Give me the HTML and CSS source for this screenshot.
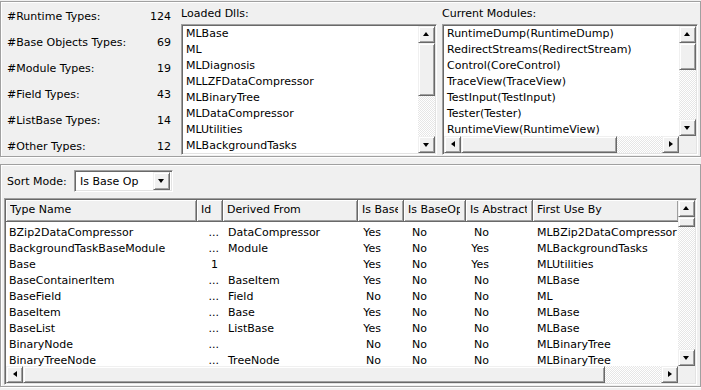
FILE: index.html
```html
<!DOCTYPE html>
<html>
<head>
<meta charset="utf-8">
<link rel="stylesheet" href="styles.css">
</head>
<body>
<div class="panel top">
  <div class="stats">
    <div class="stat"><span>#Runtime Types:</span><span>124</span></div>
    <div class="stat"><span>#Base Objects Types:</span><span>69</span></div>
    <div class="stat"><span>#Module Types:</span><span>19</span></div>
    <div class="stat"><span>#Field Types:</span><span>43</span></div>
    <div class="stat"><span>#ListBase Types:</span><span>14</span></div>
    <div class="stat"><span>#Other Types:</span><span>12</span></div>
  </div>
  <div class="group">
    <div class="glabel">Loaded Dlls:</div>
    <div class="listbox sunken lb1">
      <div class="items">
        <div>MLBase</div>
        <div>ML</div>
        <div>MLDiagnosis</div>
        <div>MLLZFDataCompressor</div>
        <div>MLBinaryTree</div>
        <div>MLDataCompressor</div>
        <div>MLUtilities</div>
        <div>MLBackgroundTasks</div>
      </div>
      <div class="vscroll">
        <div class="sbtn up"></div>
        <div class="thumb t1"></div>
        <div class="track"></div>
        <div class="sbtn down"></div>
      </div>
    </div>
  </div>
  <div class="group">
    <div class="glabel">Current Modules:</div>
    <div class="listbox sunken lb2">
      <div class="items">
        <div>RuntimeDump(RuntimeDump)</div>
        <div>RedirectStreams(RedirectStream)</div>
        <div>Control(CoreControl)</div>
        <div>TraceView(TraceView)</div>
        <div>TestInput(TestInput)</div>
        <div>Tester(Tester)</div>
        <div>RuntimeView(RuntimeView)</div>
      </div>
      <div class="vscroll">
        <div class="sbtn up"></div>
        <div class="thumb t2"></div>
        <div class="track"></div>
        <div class="sbtn down"></div>
      </div>
      <div class="hscroll">
        <div class="sbtn left"></div>
        <div class="thumb h2"></div>
        <div class="track"></div>
        <div class="sbtn right"></div>
      </div>
      <div class="corner"></div>
    </div>
  </div>
</div>

<div class="panel bottom">
  <div class="sortrow">
    <span class="sortlabel">Sort Mode:</span>
    <div class="combo sunken">
      <span class="combotext">Is Base Op</span>
      <div class="sbtn down ddbtn"></div>
    </div>
  </div>
  <div class="table sunken">
    <div class="grid">
      <div class="hrow">
        <div class="hc"><span>Type Name</span></div>
        <div class="hc"><span>Id</span></div>
        <div class="hc"><span>Derived From</span></div>
        <div class="hc"><span>Is Base</span></div>
        <div class="hc"><span>Is BaseOp</span></div>
        <div class="hc"><span>Is Abstract</span></div>
        <div class="hc"><span>First Use By</span></div>
      </div>
      <div class="rows">
        <div class="row"><span>BZip2DataCompressor</span><span class="id">...</span><span>DataCompressor</span><span class="c4">Yes</span><span class="c5">No</span><span class="c6">No</span><span>MLBZip2DataCompressor</span></div>
        <div class="row"><span>BackgroundTaskBaseModule</span><span class="id">...</span><span>Module</span><span class="c4">Yes</span><span class="c5">No</span><span class="c6">Yes</span><span>MLBackgroundTasks</span></div>
        <div class="row"><span>Base</span><span class="id one">1</span><span></span><span class="c4">Yes</span><span class="c5">No</span><span class="c6">Yes</span><span>MLUtilities</span></div>
        <div class="row"><span>BaseContainerItem</span><span class="id">...</span><span>BaseItem</span><span class="c4">Yes</span><span class="c5">No</span><span class="c6">No</span><span>MLBase</span></div>
        <div class="row"><span>BaseField</span><span class="id">...</span><span>Field</span><span class="c4">No</span><span class="c5">No</span><span class="c6">No</span><span>ML</span></div>
        <div class="row"><span>BaseItem</span><span class="id">...</span><span>Base</span><span class="c4">Yes</span><span class="c5">No</span><span class="c6">No</span><span>MLBase</span></div>
        <div class="row"><span>BaseList</span><span class="id">...</span><span>ListBase</span><span class="c4">Yes</span><span class="c5">No</span><span class="c6">No</span><span>MLBase</span></div>
        <div class="row"><span>BinaryNode</span><span class="id">...</span><span></span><span class="c4">No</span><span class="c5">No</span><span class="c6">No</span><span>MLBinaryTree</span></div>
        <div class="row"><span>BinaryTreeNode</span><span class="id">...</span><span>TreeNode</span><span class="c4">No</span><span class="c5">No</span><span class="c6">No</span><span>MLBinaryTree</span></div>
      </div>
    </div>
    <div class="vscroll tv">
      <div class="sbtn up"></div>
      <div class="thumb t3"></div>
      <div class="track"></div>
      <div class="sbtn down"></div>
    </div>
    <div class="hscroll th">
      <div class="sbtn left"></div>
      <div class="thumb h3"></div>
      <div class="track"></div>
      <div class="sbtn right"></div>
    </div>
    <div class="corner"></div>
  </div>
</div>
</body>
</html>
```

FILE: styles.css
```css
* { box-sizing: border-box; }
html, body { margin: 0; padding: 0; }
body {
  background: #f0f0f0;
  font-family: "DejaVu Sans", sans-serif;
  font-size: 11px;
  color: #000;
  width: 701px;
  height: 390px;
  overflow: hidden;
}

.panel {
  border: 1px solid #a0a0a0;
  box-shadow: inset 1px 1px 0 #fff, 1px 1px 0 #fff;
}

.top {
  margin-top: 1px;
  height: 156px;
  display: grid;
  grid-template-columns: 175px 256px 256px;
  column-gap: 5px;
}

.stats {
  padding: 1px 5px 0 6px;
  display: grid;
  grid-template-rows: repeat(6, 26px);
}
.stat {
  display: flex;
  justify-content: space-between;
  align-items: center;
}

.group {
  display: flex;
  flex-direction: column;
}
.glabel {
  height: 22px;
  line-height: 22px;
  padding-top: 1px;
}

.sunken {
  border: 1px solid;
  border-color: #a0a0a0 #fff #fff #a0a0a0;
  box-shadow: inset 1px 1px 0 #696969, inset -1px -1px 0 #e3e3e3;
}

.listbox {
  height: 131px;
  background: #fff;
  padding: 1px;
  display: grid;
  grid-template-columns: minmax(0, 1fr) 17px;
  overflow: hidden;
}
.lb2 {
  grid-template-rows: minmax(0, 1fr) 17px;
}
.items {
  padding-left: 3px;
  overflow: hidden;
  white-space: nowrap;
}
.items div {
  height: 16px;
  line-height: 16px;
}

.vscroll {
  display: flex;
  flex-direction: column;
  background: #f0f0f0;
}
.hscroll {
  display: flex;
  flex-direction: row;
  background: #f0f0f0;
}
.track {
  flex: 1;
  background: repeating-conic-gradient(#fff 0 25%, #e6e6e6 0 50%) 0 0 / 2px 2px;
}
.corner {
  background: #f0f0f0;
}

.sbtn, .thumb {
  flex: none;
  background: #f0f0f0;
  border: 1px solid;
  border-color: #f0f0f0 #696969 #696969 #f0f0f0;
  box-shadow: inset 1px 1px 0 #fff, inset -1px -1px 0 #a0a0a0;
  position: relative;
}
.vscroll .sbtn { height: 17px; }
.hscroll .sbtn { width: 17px; }
.t1 { height: 53px; }
.t2 { height: 27px; }
.t3 { height: 10px; }
.h2 { width: 156px; }
.h3 { width: 582px; }

.sbtn::after {
  content: "";
  position: absolute;
  width: 0;
  height: 0;
  border: 0 solid transparent;
}
.up::after {
  left: 4px; top: 5px;
  border-width: 0 3.5px 4px 3.5px;
  border-bottom-color: #000;
}
.down::after {
  left: 4px; top: 6px;
  border-width: 4px 3.5px 0 3.5px;
  border-top-color: #000;
}
.left::after {
  left: 6px; top: 4px;
  border-width: 3.5px 4px 3.5px 0;
  border-right-color: #000;
}
.right::after {
  left: 6px; top: 4px;
  border-width: 3.5px 0 3.5px 4px;
  border-left-color: #000;
}

.bottom {
  margin-top: 7px;
  height: 223px;
  padding: 5px 3px 0 3px;
}
.sortrow {
  display: flex;
  align-items: center;
  height: 22px;
}
.sortlabel {
  padding-left: 3px;
  width: 70px;
}
.combo {
  width: 99px;
  height: 22px;
  background: #fff;
  display: flex;
  align-items: center;
  justify-content: space-between;
  padding: 2px;
}
.combotext {
  padding-left: 3px;
}
.ddbtn {
  width: 17px;
  height: 18px;
}

.table {
  margin-top: 6px;
  height: 187px;
  background: #fff;
  padding: 1px;
  display: grid;
  grid-template-columns: minmax(0, 1fr) 17px;
  grid-template-rows: minmax(0, 1fr) 17px;
  overflow: hidden;
}
.grid {
  overflow: hidden;
  white-space: nowrap;
}
.hrow, .row {
  display: grid;
  grid-template-columns: 191px 26px 135px 46px 62px 67px 146px;
}
.hrow {
  height: 22px;
}
.hc {
  background: #f0f0f0;
  border-right: 1px solid #696969;
  border-bottom: 1px solid #696969;
  box-shadow: inset 1px 1px 0 #fff, inset -1px -1px 0 #a0a0a0;
  line-height: 20px;
  padding: 0 5px 0 4px;
  white-space: nowrap;
}
.hc span {
  display: block;
  overflow: hidden;
}
.rows {
  padding-top: 3px;
}
.row {
  height: 16px;
  line-height: 16px;
}
.row span {
  overflow: hidden;
  padding-left: 3px;
}
.row span:nth-child(3) { padding-left: 5px; }
.row span:nth-child(7) { padding-left: 4px; }
.row .id {
  text-align: right;
  padding: 0 4px 0 0;
}
.row .one { padding-right: 5px; }
.row .c4 { text-align: right; padding: 0 23px 0 0; }
.row .c5 { text-align: right; padding: 0 39px 0 0; }
.row .c6 { text-align: right; padding: 0 44px 0 0; }
```
